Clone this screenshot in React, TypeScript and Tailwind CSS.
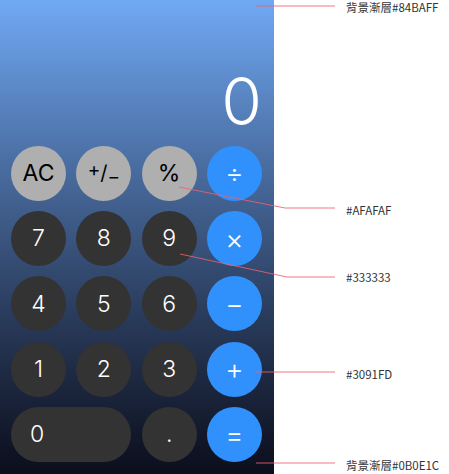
import React from 'react';

type Key = {
  label: React.ReactNode;
  kind: 'fn' | 'num' | 'op';
  wide?: boolean;
};

const keys: Key[] = [
  { label: 'AC', kind: 'fn' },
  {
    label: (
      <span className="relative -top-[1px]">
        <span className="relative -top-[4px] text-[19px]">+</span>
        <span className="text-[20px]">/</span>
        <span className="relative top-[3px] text-[19px]">−</span>
      </span>
    ),
    kind: 'fn',
  },
  { label: '%', kind: 'fn' },
  { label: '÷', kind: 'op' },
  { label: '7', kind: 'num' },
  { label: '8', kind: 'num' },
  { label: '9', kind: 'num' },
  { label: '×', kind: 'op' },
  { label: '4', kind: 'num' },
  { label: '5', kind: 'num' },
  { label: '6', kind: 'num' },
  { label: '−', kind: 'op' },
  { label: '1', kind: 'num' },
  { label: '2', kind: 'num' },
  { label: '3', kind: 'num' },
  { label: '+', kind: 'op' },
  { label: '0', kind: 'num', wide: true },
  { label: '.', kind: 'num' },
  { label: '=', kind: 'op' },
];

const kindClass = {
  fn: 'bg-[#afafaf] text-black font-normal',
  num: 'bg-[#333333] text-white font-light',
  op: 'bg-[#3091fd] text-white text-[28px] font-light',
};

// annotation labels, placed on the canvas next to their pointer lines
const notes = [
  { top: 0, text: '背景漸層#84BAFF' },
  { top: 203, text: '#AFAFAF' },
  { top: 270, text: '#333333' },
  { top: 367, text: '#3091FD' },
  { top: 458, text: '背景漸層#0B0E1C' },
];

export default function App() {
  return (
    <div className="relative w-[449px] h-[474px] bg-white overflow-hidden">
      <div
        className="w-[274px] h-[474px] flex flex-col justify-end px-[11px] pb-[12px] bg-gradient-to-b from-[#70a9f4] to-[#0b0e1c]"
        style={{ fontFamily: 'Inter, "Liberation Sans", sans-serif' }}
      >
        <div className="text-right text-white text-[66px] font-light leading-none pr-[1px] mb-[12px]">0</div>
        <div className="grid grid-cols-[repeat(4,55px)] gap-[10.33px]">
          {keys.map((k, i) => (
            <button
              key={i}
              className={`h-[55px] rounded-full flex items-center text-[23px] ${
                k.wide ? 'col-span-2 justify-start pl-[19px]' : 'justify-center'
              } ${kindClass[k.kind]}`}
            >
              {k.label}
            </button>
          ))}
        </div>
      </div>

      <svg className="absolute inset-0 pointer-events-none" width="449" height="474">
        <g stroke="#f0606e" strokeWidth="1" fill="none" opacity="0.85">
          <polyline points="256,6 335,6" />
          <polyline points="179,187 285,208 335,208" />
          <polyline points="180,254 287,277 335,277" />
          <polyline points="256,372 335,372" />
          <polyline points="256,463 335,463" />
        </g>
      </svg>

      {notes.map((n) => (
        <div
          key={n.text}
          className="absolute left-[346px] text-[11.5px] leading-[14px] text-[#333333]"
          style={{ top: n.top, fontFamily: '"Noto Sans CJK TC", "Noto Sans", sans-serif' }}
        >
          {n.text}
        </div>
      ))}
    </div>
  );
}
